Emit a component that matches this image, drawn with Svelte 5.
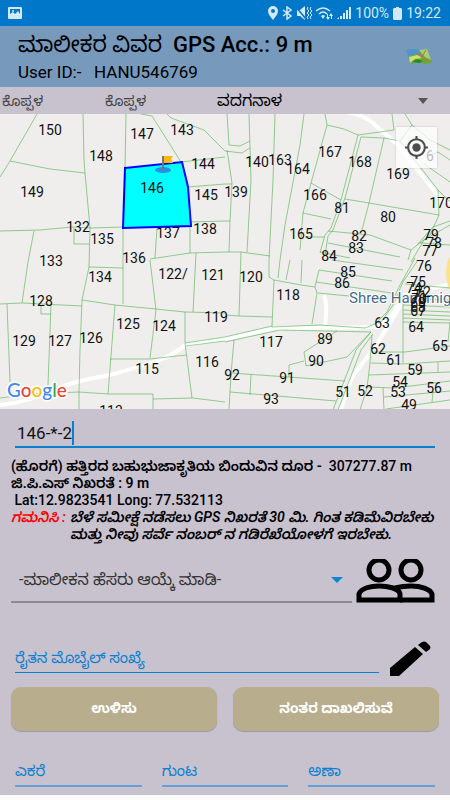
<script lang="ts">
  type Label = [string, number, number];

  let survey = "146-*-2";
  let village = "ವದಗನಾಳ";
  let owner = "-ಮಾಲೀಕನ ಹೆಸರು ಆಯ್ಕೆ ಮಾಡಿ-";
  let mobile = "";

  const areas = [
    { id: "acre", name: "ಎಕರೆ" },
    { id: "gunta", name: "ಗುಂಟ" },
    { id: "ana", name: "ಅಣಾ" },
  ];

  // survey number, centre x, baseline y
  const labels: Label[] = [
    ["150", 50, 135], ["147", 142, 139], ["143", 182, 135], ["148", 101, 161],
    ["144", 203, 169], ["149", 32, 197], ["146", 152, 193], ["145", 206, 200],
    ["132", 78, 232], ["135", 102, 244], ["137", 168, 238], ["138", 205, 234],
    ["133", 51, 266], ["136", 134, 263], ["134", 100, 282], ["122/", 173, 279],
    ["121", 213, 280], ["128", 41, 306], ["125", 128, 329], ["124", 164, 331],
    ["129", 24, 346], ["127", 60, 346], ["126", 91, 343], ["119", 216, 322],
    ["115", 147, 374], ["116", 207, 367], ["113", 111, 416], ["140", 257, 167],
    ["163", 280, 165], ["164", 298, 174], ["167", 330, 157], ["168", 360, 167],
    ["169", 398, 179], ["6", 430, 161], ["139", 236, 197], ["166", 315, 200],
    ["81", 342, 213], ["80", 388, 222], ["170", 441, 208], ["165", 301, 239],
    ["82", 359, 241], ["83", 356, 253], ["84", 329, 261], ["79", 431, 240],
    ["78", 434, 248], ["77", 430, 256], ["120", 251, 282], ["118", 288, 300],
    ["85", 348, 277], ["86", 342, 288], ["76", 424, 271], ["75", 418, 287],
    ["74", 414, 293], ["72", 423, 297], ["71", 419, 301], ["70", 419, 304],
    ["69", 418, 308], ["68", 418, 312], ["67", 418, 316], ["63", 382, 328],
    ["64", 416, 332], ["117", 271, 347], ["89", 325, 344], ["90", 316, 366],
    ["62", 378, 354], ["61", 394, 365], ["65", 440, 351], ["59", 415, 375],
    ["92", 232, 380], ["91", 287, 383], ["93", 271, 404], ["51", 343, 397],
    ["52", 365, 396], ["54", 400, 387], ["53", 398, 397], ["56", 434, 393],
    ["49", 409, 410],
  ];

  const bounds = [
    "M37 114L10 161L0 177M10 161L50 169L85 173",
    "M83 114L84 160L85 173L90 228L89 267L82 300L80 350L79 392V410",
    "M126 114L125 168M141 114L152 116L181 162M167 114L171 118L204 130L225 151",
    "M181 162L225 157M188 187L225 184M190 222L225 221",
    "M0 231L40 230L72 227L90 228L123 227M34 231L28 262L22 303M74 228V244H89",
    "M123 227V304M157 228L155 258M150 259L190 253L225 252M150 260L156 310L150 358M190 226V253M196 253L193 312",
    "M0 304L22 303L82 306M89 267L123 268M82 300L115 305L156 309L185 312L225 313",
    "M7 304L10 382M41 306V314H51M51 305L48 385M115 305L108 394M110 359H150L186 355",
    "M185 312V343L192 398M185 343L225 337L272 326M186 346L225 341",
    "M0 398L30 394L79 392L108 394L153 394V410M153 399L193 398L225 402",
    "M227 114L229 145L240 146L250 141M225 151L242 153L250 148M227 150L232 183L230 221L229 252M225 184H232M225 221H230",
    "M249 114L251 180L247 252M275 114L273 180L269 260V277L274 280L272 327",
    "M304 114L300 145L285 225L280 260L278 278M325 114L327 125L311 183L303 213L300 250M302 260L301 283",
    "M327 125L344 129L358 135L394 130M392 114L394 130",
    "M358 135L341 200L331 228L325 235L320 253M361 137L345 198L333 230L328 236L325 255",
    "M361 137L384 138L400 141M311 183L341 200M303 213L331 219M305 237H324",
    "M345 199L369 203L439 215M384 138L369 203L362 230M438 190L439 215L430 235L411 250L408 260",
    "M328 231L370 235L411 250M328 243L400 257M320 252L350 258M225 252H241L270 256M241 252L239 316",
    "M405 114L412 125L400 141M412 125L430 140L450 150M400 141L438 190L450 202M427 156L438 152L450 160M424 164L450 182",
    "M411 262L424 240L450 225M417 245L433 227L450 221M420 243L450 245",
    "M225 315L239 316L272 317M274 280L301 285L315 287L317 293L312 324M290 260L286 280",
    "M315 287L319 270L392 281M316 282L392 293M318 293L349 296M332 260L403 270",
    "M272 327L320 325L365 328L375 324L387 312L400 285L415 258M381 322L393 305L403 282L418 260",
    "M225 342L280 330L371 332L347 357L306 366L304 352L337 331",
    "M234 340L231 374L229 410M231 373L245 374L345 381M251 374L250 395M230 392L336 401M304 361L289 365V377",
    "M371 332L356 350L333 410M373 334L361 350L338 410M372 335L370 363L367 388L360 410",
    "M403 295V363M403 299L450 300M403 305L450 307M403 310L450 312M403 314L450 316M403 318L450 320M403 322L450 323M450 322L448 342",
    "M372 352H405L450 346M371 363L403 364L450 361M369 375L450 372M367 387L395 388L450 381M383 388L384 410",
    "M384 397L450 391M433 392L432 402M386 409L450 400M438 362V372M405 284L450 288",
  ];
</script>

<div class="status">
  <svg class="photo" viewBox="0 0 14 12">
    <rect width="14" height="12" rx="1" fill="#d4e9f7" />
    <path d="M2 2h10v8H2z" fill="#0077c8" />
    <path d="M2 10V7l3-2 2 2 3-3 2 3v3z" />
    <circle cx="5" cy="4" r="1" />
  </svg>
  <svg class="pin" viewBox="0 0 10 14">
    <path fill-rule="evenodd" d="M5 0a5 5 0 0 0-5 5c0 3.500 5 9 5 9s5-5.500 5-9a5 5 0 0 0-5-5zm0 3a2 2 0 1 1 0 4 2 2 0 0 1 0-4z" />
  </svg>
  <svg class="bt" viewBox="0 0 10 14">
    <path class="line thick" d="M1 4l8 6-4 3V1l4 3-8 6" />
  </svg>
  <svg class="mute" viewBox="0 0 16 14">
    <path d="M1 4h3l5-4v14l-5-4H1z" />
    <path d="M0 1l10 12" stroke="#0077c8" stroke-width="1.500" />
    <path class="line" d="M12 1l-1 2 2 2-2 2 2 2-2 2 1 2M15 1l-1 2 2 2-2 2 2 2-2 2 1 2" />
  </svg>
  <svg class="wifi" viewBox="0 0 17 14">
    <path class="line thick" d="M0 5q7-6 14 0M3 8q4-4 8 0" />
    <path d="M5 10q2-2 4 0l-2 3z" />
    <path d="M12 14l-2-3h1V8h1v3h2zM15 7l2 3h-1v3h-1v-3h-2z" />
  </svg>
  <svg class="signal" viewBox="0 0 14 12">
    <path d="M0 12l2-2v2zM3 9h2v3H3zM6 6h2v6H6zM9 3h2v9H9zM12 0h2v12h-2z" />
  </svg>
  <span>100%</span>
  <svg class="battery" viewBox="0 0 9 13">
    <path d="M3 0h3v1h2l1 1v10l-1 1H1l-1-1V2l1-1h2z" />
  </svg>
  <span>19:22</span>
</div>

<header>
  <div>
    <h1>ಮಾಲೀಕರ ವಿವರ&nbsp; <b>GPS Acc.: 9 m</b></h1>
    <p class="user">User ID:-&nbsp;&nbsp; HANU546769</p>
  </div>
  <button class="map-btn" aria-label="Map">
    <svg viewBox="0 0 26 17">
      <path d="M0 2l8-1 7 1 6-1 5 14-7 1-8-2-6 2z" fill="#69a83c" />
      <path d="M0 2l8-1 5 1 2 5-6-1-7 2z" fill="#4c93d8" />
      <path d="M13 2l8-1 4 11-6-3z" fill="#a4cf7a" />
      <path d="M3 9l8-2 6 3-8 1-5 4z" fill="#c9dc7e" />
      <path d="M6 14l5-3 6 2-3 2z" fill="#2f8a1e" />
      <path d="M9 5l6 2 2 4 6 2M20 2l-3 5-2 3" fill="none" stroke="#c96f3d" />
    </svg>
  </button>
</header>

<div class="places">
  <span>ಕೊಪ್ಪಳ</span>
  <span>ಕೊಪ್ಪಳ</span>
  <select bind:value={village} aria-label="Village">
    <option>ವದಗನಾಳ</option>
  </select>
</div>

<div class="map">
  <svg class="plots" viewBox="0 114 450 295">
    <g class="roads">
      <path d="M345 112Q364 114 375 125L398 145L440 198L455 206" />
      <path d="M0 405Q30 402 60 388Q70 382 110 375Q150 364 165 358Q180 350 186 344" />
      <path d="M186 345L230 338L275 328L320 328L378 327L392 315L405 295L455 283" />
      <path d="M402 303L375 347L352 377L340 412" />
      <path d="M324 295Q328 305 325 325" />
    </g>
    <ellipse cx="457" cy="273" rx="11" ry="22" fill="#fbe38e" />
    <path class="bounds" d={bounds.join("")} />
    <path class="chosen" d="M125 168L182 162L188 187L191 226L123 228Z" />
    <ellipse cx="163" cy="170" rx="8" ry="3" fill="#278fe8" />
    <path d="M163 156v14" stroke="#777" stroke-width="2" />
    <path d="M164 156h9l-2 3 2 4h-9z" fill="#ffb80c" />
    <text class="place" x="349" y="303">Shree Hanumige</text>
    {#each labels as [name, x, y]}
      <text class="number" {x} {y}>{name}</text>
    {/each}
    <text class="logo" x="7" y="397"
      ><tspan fill="#4285f4">G</tspan><tspan fill="#ea4335">o</tspan><tspan fill="#fbbc05">o</tspan><tspan
        fill="#4285f4">g</tspan><tspan fill="#34a853">l</tspan><tspan fill="#ea4335">e</tspan></text
    >
  </svg>
  <button class="locate" aria-label="My location">
    <svg viewBox="0 0 24 24">
      <circle cx="12" cy="12" r="8" fill="none" stroke="#4d4d4d" stroke-width="2" />
      <circle cx="12" cy="12" r="4" fill="#4d4d4d" />
      <path d="M12 1v3M12 20v3M1 12h3M20 12h3" stroke="#4d4d4d" stroke-width="2" />
    </svg>
  </button>
</div>

<main>
  <div class="survey">
    <input bind:value={survey} aria-label="Survey number" />
    <i class="caret"></i>
  </div>

  <div class="info">
    <p>(ಹೊರಗೆ) ಹತ್ತಿರದ ಬಹುಭುಜಾಕೃತಿಯ ಬಿಂದುವಿನ ದೂರ -&nbsp; <span class="figure">307277.87 m</span></p>
    <p>ಜಿ.ಪಿ.ಎಸ್ ನಿಖರತೆ : 9 m</p>
    <p class="figure">&nbsp;Lat:12.9823541 Long: 77.532113</p>
    <div class="note">
      <span class="red">ಗಮನಿಸಿ :</span>
      <span>ಬೆಳೆ ಸಮೀಕ್ಷೆ ನಡೆಸಲು GPS ನಿಖರತೆ 30 ಮಿ. ಗಿಂತ ಕಡಿಮೆವಿರಬೇಕು<br />ಮತ್ತು ನೀವು ಸರ್ವೆ ನಂಬರ್ ನ ಗಡಿರೆಖೆಯೋಳಗೆ ಇರಬೇಕು.</span>
    </div>
  </div>

  <div class="row owner">
    <select bind:value={owner} aria-label="Owner">
      <option>-ಮಾಲೀಕನ ಹೆಸರು ಆಯ್ಕೆ ಮಾಡಿ-</option>
    </select>
    <button class="people" aria-label="Owners">
      <svg viewBox="0 0 80 44">
        <g fill="none" stroke="#000" stroke-width="5">
          <circle cx="23" cy="11" r="10" />
          <circle cx="55" cy="11" r="10" />
          <path d="M3 41V35C5 29 15 27 23 27S43 29 44 35V41Z" />
          <path d="M39 29Q47 27 55 27C65 27 74 30 76 35V41H44" />
        </g>
      </svg>
    </button>
  </div>

  <div class="row mobile">
    <input bind:value={mobile} placeholder="ರೈತನ ಮೊಬೈಲ್ ಸಂಖ್ಯೆ" aria-label="ರೈತನ ಮೊಬೈಲ್ ಸಂಖ್ಯೆ" />
    <button class="edit" aria-label="Edit">
      <svg viewBox="0 0 41 35">
        <path d="M0 27L25 6L33 13L9 35H0ZM28 4L32 1Q34 0 36 1L40 5Q41 7 40 8L36 11Z" />
      </svg>
    </button>
  </div>

  <div class="actions">
    <button>ಉಳಿಸು</button>
    <button>ನಂತರ ದಾಖಲಿಸುವೆ</button>
  </div>

  <div class="areas">
    {#each areas as area}
      <input id={area.id} placeholder={area.name} aria-label={area.name} />
    {/each}
  </div>
</main>

<style>
  :global(body) {
    background: #fafafa;
    font-family: Roboto, "Noto Sans Kannada", "Noto Sans", sans-serif;
    color: #000;
  }
  button,
  input,
  select {
    font-family: inherit;
    border: 0;
    margin: 0;
    padding: 0;
    background: none;
    border-radius: 0;
    outline: 0;
    box-sizing: border-box;
  }
  svg {
    display: block;
  }
  h1,
  p {
    margin: 0;
    white-space: nowrap;
  }
  .status {
    display: flex;
    align-items: center;
    gap: 4px;
    height: 26px;
    padding: 0 9px 0 8px;
    background: #0077c8;
    color: #d4e9f7;
    font-size: 14px;
  }
  .status svg {
    fill: #d4e9f7;
    height: 14px;
    flex: none;
  }
  .status .photo {
    width: 14px;
    height: 12px;
    margin-right: auto;
  }
  .status .line {
    fill: none;
    stroke: #d4e9f7;
  }
  .status .thick {
    stroke-width: 1.5;
  }
  .pin,
  .bt {
    width: 10px;
  }
  .mute {
    width: 16px;
  }
  .wifi {
    width: 17px;
  }
  .status .signal {
    width: 14px;
    height: 12px;
  }
  .status .battery {
    width: 9px;
    height: 13px;
  }
  header {
    display: flex;
    justify-content: space-between;
    align-items: center;
    height: 61px;
    padding: 0 18px;
    background: #7799bb;
  }
  h1 {
    font-size: 22px;
    font-weight: 400;
    line-height: 30px;
  }
  h1 b {
    font-weight: 500;
  }
  .user {
    font-size: 17px;
    line-height: 24px;
  }
  .map-btn svg {
    width: 26px;
    height: 17px;
  }
  .places {
    display: grid;
    grid-template-columns: 103px 112px 1fr;
    align-items: center;
    height: 27px;
    padding: 0 20px 0 2px;
    background: #c8c2cf;
    font-size: 14px;
    line-height: 22px;
    color: #444;
  }
  select {
    appearance: none;
    color: #000;
  }
  .places select {
    font-size: 16px;
    height: 27px;
    line-height: 27px;
    background: url("data:image/svg+xml,%3Csvg xmlns='http://www.w3.org/2000/svg' width='12' height='6'%3E%3Cpath d='M0 0h10L5 6z' fill='%23555'/%3E%3C/svg%3E")
      no-repeat right center;
  }
  .map {
    position: relative;
    background: #f0eeed;
  }
  .plots {
    width: 100%;
  }
  .roads {
    fill: none;
    stroke: #fff;
    stroke-width: 4;
  }
  .bounds {
    fill: none;
    stroke: #43ab43;
    stroke-width: 0.7;
    opacity: 0.8;
  }
  .chosen {
    fill: #0ff;
    stroke: #00f;
    stroke-width: 2;
  }
  .number {
    font-size: 14px;
    text-anchor: middle;
    fill: #111;
  }
  .place {
    font-size: 15px;
    fill: #456a85;
    stroke: #fff;
    stroke-width: 2;
    paint-order: stroke;
  }
  .logo {
    font-family: Lato, sans-serif;
    font-size: 19px;
    font-weight: 500;
    stroke: #fff;
    stroke-width: 3;
    paint-order: stroke;
  }
  .locate {
    position: absolute;
    top: 13px;
    right: 13px;
    width: 41px;
    height: 41px;
    padding: 8px;
    background: rgba(255, 255, 255, 0.7);
    box-shadow: 0 0 2px rgba(0, 0, 0, 0.2);
  }
  main {
    padding: 0 11px 8px;
    background: #c8c2cf;
  }
  .survey {
    display: flex;
    align-items: center;
    height: 37px;
    margin: 0 4px;
    border-bottom: 2px solid #0a80d0;
  }
  .survey input {
    field-sizing: content;
    margin-top: 10px;
    padding-left: 2px;
    font-size: 17px;
    color: #111;
  }
  .caret {
    width: 2px;
    height: 24px;
    margin-top: 10px;
    background: #0a80d0;
  }
  .info {
    margin-top: 10px;
    font-size: 14px;
    font-weight: 600;
    line-height: 17px;
  }
  .figure {
    font-weight: 500;
  }
  .note {
    display: grid;
    grid-template-columns: 59px 1fr;
    font-style: italic;
    white-space: nowrap;
  }
  .red {
    color: #f00;
  }
  .row {
    display: flex;
    align-items: flex-end;
  }
  .owner {
    gap: 4px;
    margin-top: 16px;
    padding-right: 3px;
  }
  .owner select {
    flex: 1;
    min-width: 0;
    height: 44px;
    line-height: 40px;
    padding-left: 8px;
    font-size: 16px;
    color: #333;
    border-bottom: 2px solid #8f8796;
    background: url("data:image/svg+xml,%3Csvg xmlns='http://www.w3.org/2000/svg' width='12' height='6'%3E%3Cpath d='M0 0h12L6 6z' fill='%230a86d4'/%3E%3C/svg%3E")
      no-repeat right 9px center;
  }
  .people svg {
    width: 80px;
    height: 44px;
  }
  .mobile {
    gap: 11px;
    margin-top: 38px;
    padding: 0 8px 0 4px;
  }
  .mobile input {
    flex: 1;
    min-width: 0;
    height: 30px;
    margin-bottom: 3px;
    font-size: 15px;
    border-bottom: 1px solid #0a80d0;
  }
  .edit svg {
    width: 41px;
    height: 35px;
  }
  input::placeholder {
    color: #0a80d0;
    opacity: 1;
  }
  .actions {
    display: grid;
    grid-template-columns: 1fr 1fr;
    gap: 16px;
    margin-top: 11px;
  }
  .actions button {
    height: 44px;
    padding-top: 2px;
    font-size: 14px;
    font-weight: 700;
    color: #fff;
    background: #b8ad8d;
    border-radius: 10px;
    box-shadow: 0 1px 1px rgba(80, 70, 90, 0.35);
  }
  .areas {
    display: grid;
    grid-template-columns: repeat(3, 1fr);
    gap: 20px;
    margin: 26px 4px 0;
  }
  .areas input {
    min-width: 0;
    height: 30px;
    font-size: 15px;
    border-bottom: 2px solid #64a0d4;
  }
</style>
